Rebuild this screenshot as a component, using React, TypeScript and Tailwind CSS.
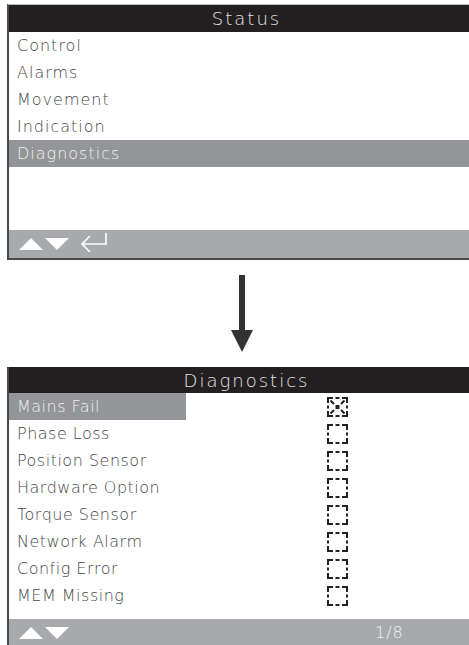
import React from "react";

const statusItems = ["Control", "Alarms", "Movement", "Indication", "Diagnostics"];
const diagItems = [
  "Mains Fail",
  "Phase Loss",
  "Position Sensor",
  "Hardware Option",
  "Torque Sensor",
  "Network Alarm",
  "Config Error",
  "MEM Missing",
];

const font = { fontFamily: '"DejaVu Sans", "Liberation Sans", sans-serif' };

function UpDown() {
  return (
    <svg width="52" height="14" viewBox="0 0 52 14" className="block">
      <polygon points="0,13 12,1 24,13" fill="#fff" />
      <polygon points="26,1 50,1 38,13" fill="#fff" />
    </svg>
  );
}

function EnterIcon() {
  return (
    <svg width="30" height="24" viewBox="0 0 30 24" className="block">
      <path d="M1 12 H25 V1 M9 4 L1 12 L9 20" fill="none" stroke="#fff" strokeWidth="1.6" />
    </svg>
  );
}

// dashed box, corners solid, one gap per side
function Checkbox({ checked }: { checked?: boolean }) {
  return (
    <svg width="21" height="20" viewBox="0 0 21 20" className="block">
      <g stroke="#222" strokeWidth="2" fill="none">
        <path d="M1 6 V1 H6 M8.5 1 H12.5 M15 1 H20 V6 M20 8.5 V11.5 M20 14 V19 H15 M12.5 19 H8.5 M6 19 H1 V14 M1 11.5 V8.5" />
        {checked && <path d="M3.5 3.5 L7 7 M17.5 3.5 L14 7 M3.5 16.5 L7 13 M17.5 16.5 L14 13" />}
      </g>
      {checked && <rect x="8.5" y="8" width="4" height="4" fill="#222" />}
    </svg>
  );
}

export default function App() {
  return (
    <div className="w-[469px] h-[645px] overflow-hidden bg-white" style={font}>
      {/* STATUS SCREEN */}
      <div className="mt-[4px] ml-[7px] w-[477px] border-t border-t-[#bdbdbd] border-l-2 border-l-[#4a4a4a] border-b-2 border-b-[#4a4a4a]">
        <div className="h-[27px] bg-[#231f20] flex items-center justify-center text-[18px] font-extralight tracking-[2px] text-[#e4e4e4]">
          Status
        </div>
        {statusItems.map((item, i) => (
          <div
            key={item}
            className={`h-[27px] flex items-center pl-[8px] text-[16px] font-extralight tracking-[1px] ${
              i === 4 ? "bg-[#939598] text-[#f0f0f0]" : "text-[#474747]"
            }`}
          >
            {item}
          </div>
        ))}
        <div className="h-[63px]" />
        <div className="h-[28px] bg-[#a7a9ac] flex items-center pl-[10px] gap-[10px]">
          <UpDown />
          <EnterIcon />
        </div>
      </div>

      {/* ARROW */}
      <div className="h-[107px] flex justify-center pt-[15px] pl-[15px]">
        <svg width="22" height="78" viewBox="0 0 22 78" className="block">
          <rect x="8" y="0" width="6" height="56" fill="#333" />
          <polygon points="0,55 22,55 11,77" fill="#333" />
        </svg>
      </div>

      {/* DIAGNOSTICS SCREEN */}
      <div className="ml-[7px] w-[477px] border-l-2 border-l-[#4a4a4a]">
        <div className="h-[26px] bg-[#231f20] flex items-center justify-center text-[18px] font-extralight tracking-[2px] text-[#e4e4e4]">
          Diagnostics
        </div>
        {diagItems.map((item, i) => (
          <div key={item} className="h-[27px] flex items-center">
            <div
              className={`w-[177px] h-full flex items-center pl-[8px] text-[16px] font-extralight tracking-[0.5px] ${
                i === 0 ? "bg-[#939598] text-[#f0f0f0]" : "text-[#474747]"
              }`}
            >
              {item}
            </div>
            <div className="ml-[141px]">
              <Checkbox checked={i === 0} />
            </div>
          </div>
        ))}
        <div className="h-[10px]" />
        <div className="h-[28px] bg-[#a7a9ac] flex items-center pl-[10px]">
          <UpDown />
          <span className="ml-[304px] text-[16px] font-extralight tracking-[1px] text-[#f2f2f2]">1/8</span>
        </div>
      </div>
    </div>
  );
}
